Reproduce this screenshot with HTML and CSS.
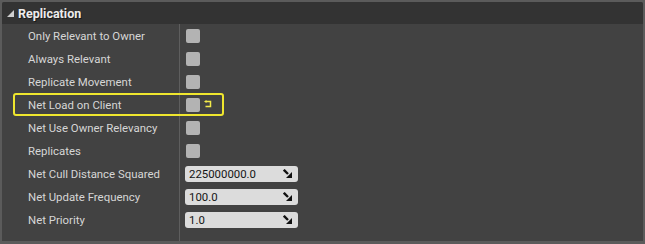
FILE: index.html
```html
<!DOCTYPE html>
<html>
<head>
<meta charset="utf-8">
<link rel="stylesheet" href="styles.css">
</head>
<body>
<div class="panel">
  <div class="header">
    <svg class="tri" width="7" height="7" viewBox="0 0 7 7"><polygon points="7,0 7,7 0,7" fill="#cfcfcf"/></svg>
    <span class="title">Replication</span>
  </div>
  <div class="body">
    <div class="row"><div class="label">Only Relevant to Owner</div><div class="value"><span class="check"></span></div></div>
    <div class="row"><div class="label">Always Relevant</div><div class="value"><span class="check"></span></div></div>
    <div class="row"><div class="label">Replicate Movement</div><div class="value"><span class="check"></span></div></div>
    <div class="row hl"><div class="label">Net Load on Client</div><div class="value"><span class="check"></span>
      <svg class="reset" width="9" height="8" viewBox="0 0 9 8"><path d="M2.5 1.5 H7.5 V6.5 H2.5" fill="none" stroke="#f2e94a" stroke-width="1.5"/><path d="M3.5 0 L1 1.5 L3.5 3 Z" fill="#f2e94a"/></svg>
    </div><span class="ring"></span></div>
    <div class="row"><div class="label">Net Use Owner Relevancy</div><div class="value"><span class="check"></span></div></div>
    <div class="row"><div class="label">Replicates</div><div class="value"><span class="check"></span></div></div>
    <div class="row"><div class="label">Net Cull Distance Squared</div><div class="value"><div class="num"><span>225000000.0</span><svg width="9" height="9" viewBox="0 0 9 9"><path d="M0.8 0.8 L5 5" stroke="#111" stroke-width="2.4"/><polygon points="9,3 9,9 3,9" fill="#111"/></svg></div></div></div>
    <div class="row"><div class="label">Net Update Frequency</div><div class="value"><div class="num"><span>100.0</span><svg width="9" height="9" viewBox="0 0 9 9"><path d="M0.8 0.8 L5 5" stroke="#111" stroke-width="2.4"/><polygon points="9,3 9,9 3,9" fill="#111"/></svg></div></div></div>
    <div class="row"><div class="label">Net Priority</div><div class="value"><div class="num"><span>1.0</span><svg width="9" height="9" viewBox="0 0 9 9"><path d="M0.8 0.8 L5 5" stroke="#111" stroke-width="2.4"/><polygon points="9,3 9,9 3,9" fill="#111"/></svg></div></div></div>
    <div class="row filler"><div class="label"></div><div class="value"></div></div>
  </div>
</div>
</body>
</html>
```
FILE: styles.css
```css
html, body {
  margin: 0;
  padding: 0;
  background: #5b5b5b;
}
body {
  width: 645px;
  height: 244px;
  font-family: Roboto, "Liberation Sans", sans-serif;
}
.panel {
  margin: 2px 2px 0 2px;
  width: 641px;
  height: 239px;
  background: #424242;
  border-radius: 2px 2px 0 0;
  display: flex;
  flex-direction: column;
  overflow: hidden;
}
.header {
  height: 22px;
  background: #333333;
  display: flex;
  align-items: center;
  flex-shrink: 0;
}
.tri {
  margin-left: 5px;
  margin-right: 4px;
  margin-top: 1px;
}
.title {
  color: #ececec;
  font-weight: bold;
  font-size: 12.5px;
  text-shadow: 1px 1px 0 #1a1a1a;
}
.body {
  display: flex;
  flex-direction: column;
  flex: 1;
}
.row {
  height: 23px;
  display: flex;
  position: relative;
  flex-shrink: 0;
}
.row.filler {
  flex: 1;
  height: auto;
}
.label {
  width: 178px;
  padding-left: 26px;
  box-sizing: border-box;
  color: #d6d6d6;
  font-size: 11.4px;
  display: flex;
  align-items: center;
  border-right: 1px solid #5e5e5e;
}
.value {
  flex: 1;
  display: flex;
  align-items: center;
  padding-left: 6px;
}
.check {
  width: 14px;
  height: 14px;
  background: #b3b3b3;
  border-radius: 2px;
  display: block;
}
.reset {
  margin-left: 3px;
  margin-top: -2px;
}
.ring {
  position: absolute;
  left: 11px;
  top: 0;
  width: 211px;
  height: 23px;
  box-sizing: border-box;
  border: 2px solid #efe62e;
  border-radius: 3px;
}
.num {
  width: 113px;
  height: 16px;
  margin-left: -1px;
  background: #dcdcdc;
  border-radius: 3px;
  display: flex;
  align-items: center;
  justify-content: space-between;
  padding: 0 6px 0 4px;
  box-sizing: border-box;
  font-size: 11.4px;
  color: #141414;
}
```
